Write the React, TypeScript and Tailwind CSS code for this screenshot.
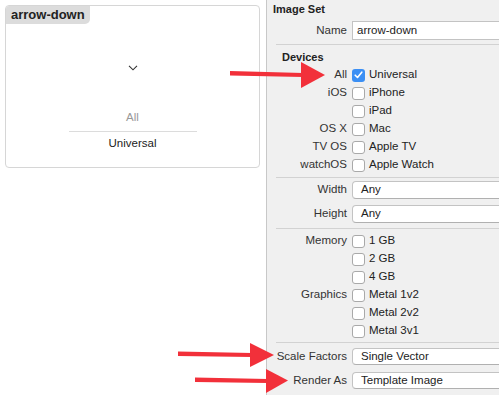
import React from 'react';

const font = { fontFamily: '"Liberation Sans", Arial, sans-serif' };

function Check({ on }: { on?: boolean }) {
  if (on) {
    return (
      <span className="flex h-[13px] w-[13px] items-center justify-center rounded-[3px] bg-[#3b8ff4]">
        <svg width="9" height="8" viewBox="0 0 9 8">
          <path d="M1.2 4.2 L3.5 6.5 L7.8 1.2" fill="none" stroke="#fff" strokeWidth="1.6" strokeLinecap="round" strokeLinejoin="round" />
        </svg>
      </span>
    );
  }
  return <span className="h-[13px] w-[13px] rounded-[3px] border border-[#a9a9a9] bg-white" />;
}

function Row({ label, text, on }: { label?: string; text: string; on?: boolean }) {
  return (
    <div className="flex h-[18px] items-center whitespace-nowrap">
      <span className="w-[80px] shrink-0 text-right text-[#333]">{label}</span>
      <span className="ml-[5px] flex items-center gap-[4px]">
        <Check on={on} />
        <span className="text-[#222]">{text}</span>
      </span>
    </div>
  );
}

function Popup({ label, value, h, className }: { label: string; value: string; h: string; className?: string }) {
  return (
    <div className={`flex items-center whitespace-nowrap ${h} ${className ?? ''}`}>
      <span className="w-[80px] shrink-0 text-right text-[#333]">{label}</span>
      <span className="ml-[5px] flex h-full w-[170px] shrink-0 items-center rounded-[4px] border border-[#c3c3c3] border-b-[#b0b0b0] bg-white pl-[8px] text-[#222]">
        {value}
      </span>
    </div>
  );
}

function Sep({ className }: { className?: string }) {
  return <div className={`ml-[9px] h-px bg-[#d2d2d2] ${className ?? ''}`} />;
}

export default function App() {
  return (
    <div className="relative flex h-[395px] w-[499px] overflow-hidden bg-white text-[11.5px]" style={font}>
      {/* asset preview */}
      <div className="w-[266px] shrink-0 p-[5px]">
        <div className="relative flex h-[163px] w-[255px] flex-col items-center rounded-[4px] border border-[#d6d6d6] bg-white">
          <div className="h-[18px] w-[84px] self-start whitespace-nowrap rounded-br-[5px] rounded-tl-[3px] bg-[#dcdcdc] pl-[5px] text-[13px] font-bold leading-[18px] text-[#222]">
            arrow-down
          </div>
          <svg className="mt-[41px]" width="10" height="6" viewBox="0 0 10 6">
            <path d="M1 0.8 L5 4.8 L9 0.8" fill="none" stroke="#333" strokeWidth="1.1" />
          </svg>
          <div className="mt-[38px] text-[#999]">All</div>
          <div className="mt-[5px] h-px w-[128px] bg-[#dcdcdc]" />
          <div className="mt-[3px] text-[#222]">Universal</div>
        </div>
      </div>

      {/* inspector */}
      <div className="flex-1 overflow-hidden border-l border-[#c8c8c8] bg-[#f0f0f0] pt-[1px]">
        <div className="h-[20px] pl-[6px] pt-[1px] text-[11px] font-bold leading-[14px] text-[#222]">Image Set</div>
        <div className="flex h-[19px] items-center whitespace-nowrap">
          <span className="w-[80px] shrink-0 text-right text-[#333]">Name</span>
          <span className="ml-[5px] flex h-full w-[170px] shrink-0 items-center border border-[#c3c3c3] bg-white pl-[4px] text-[#222]">
            arrow-down
          </span>
        </div>
        <Sep className="mt-[4px]" />
        <div className="mt-[4px] h-[16px] pl-[15px] text-[11px] font-bold leading-[16px] text-[#222]">Devices</div>
        <div className="mt-[1px]">
          <Row label="All" text="Universal" on />
          <Row label="iOS" text="iPhone" />
          <Row text="iPad" />
          <Row label="OS X" text="Mac" />
          <Row label="TV OS" text="Apple TV" />
          <Row label="watchOS" text="Apple Watch" />
        </div>
        <Sep className="mt-[3px]" />
        <Popup label="Width" value="Any" h="h-[18px]" className="mt-[3px]" />
        <Popup label="Height" value="Any" h="h-[18px]" className="mt-[6px]" />
        <Sep className="mt-[5px]" />
        <div className="mt-[3px]">
          <Row label="Memory" text="1 GB" />
          <Row text="2 GB" />
          <Row text="4 GB" />
          <Row label="Graphics" text="Metal 1v2" />
          <Row text="Metal 2v2" />
          <Row text="Metal 3v1" />
        </div>
        <Sep className="mt-[2px]" />
        <Popup label="Scale Factors" value="Single Vector" h="h-[17px]" className="mt-[5px]" />
        <Popup label="Render As" value="Template Image" h="h-[17px]" className="mt-[7px]" />
      </div>

      {/* annotation arrows */}
      <svg className="pointer-events-none absolute left-0 top-0" width="499" height="395" viewBox="0 0 499 395">
        <g fill="#f2303a">
          <polygon points="230,71 303,73 303,77 230,75.5" />
          <polygon points="301,62 325,75 301,88" />
          <polygon points="178,351.5 252,353 252,357 178,356" />
          <polygon points="250,343 274,355 250,367" />
          <polygon points="195,377.5 268,379 268,383 195,382" />
          <polygon points="266,369 288,380.5 266,393" />
        </g>
      </svg>
    </div>
  );
}
